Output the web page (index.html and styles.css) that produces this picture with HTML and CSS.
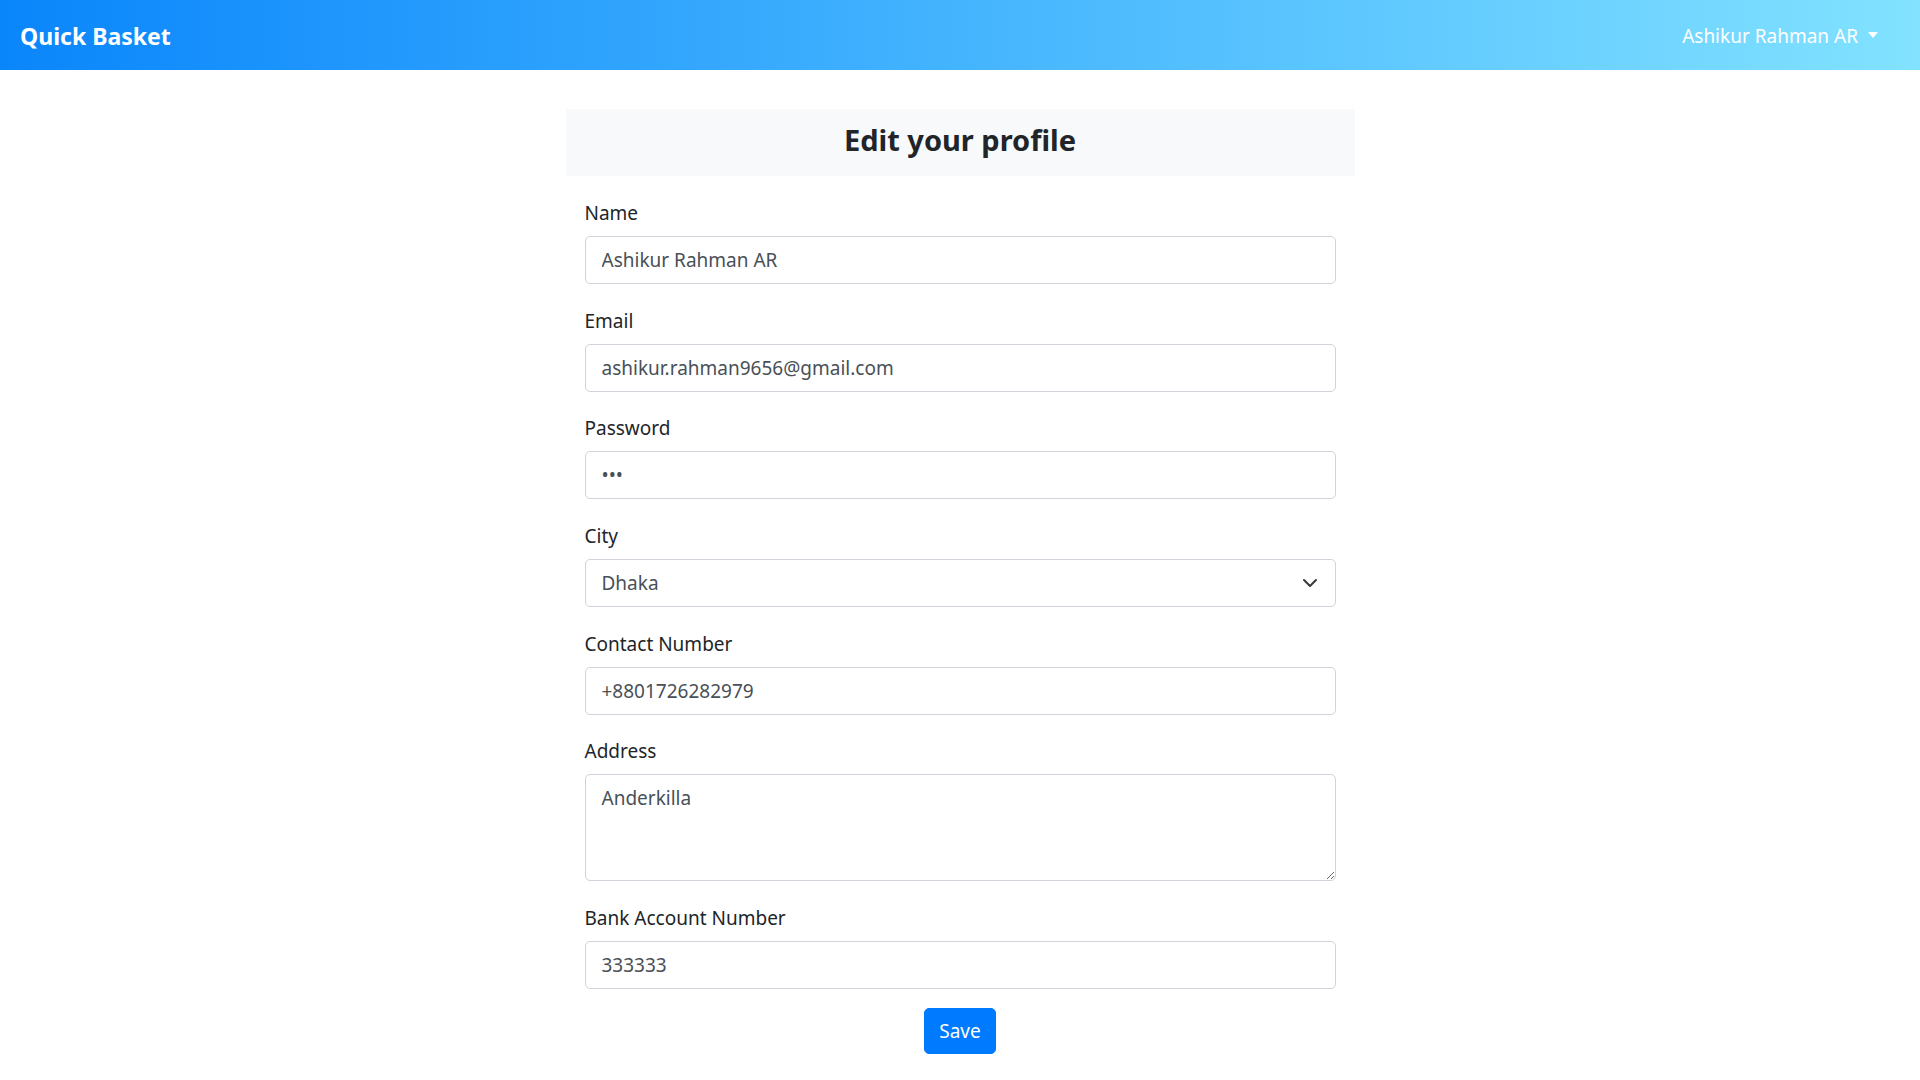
FILE: index.html
```html
<!DOCTYPE html>
<html lang="en">
<head>
<meta charset="utf-8">
<title>Quick Basket - Edit your profile</title>
<link rel="stylesheet" href="styles.css">
</head>
<body>
<header class="navbar">
  <a class="brand" href="#">Quick Basket</a>
  <div class="user">Ashikur Rahman AR<span class="caret"></span></div>
</header>
<main class="page">
  <section class="card">
    <div class="card-head"><h3 class="title">Edit your profile</h3></div>
    <form class="card-body">
      <div class="field">
        <label class="label" for="name">Name</label>
        <input class="control" id="name" type="text" value="Ashikur Rahman AR">
      </div>
      <div class="field">
        <label class="label" for="email">Email</label>
        <input class="control" id="email" type="email" value="ashikur.rahman9656@gmail.com">
      </div>
      <div class="field">
        <label class="label" for="password">Password</label>
        <input class="control" id="password" type="password" value="123">
      </div>
      <div class="field">
        <label class="label" for="city">City</label>
        <div class="select-wrap">
          <select class="control select" id="city">
            <option>Dhaka</option>
            <option>Chattogram</option>
            <option>Khulna</option>
          </select>
          <svg class="chevron" width="16" height="16" viewBox="0 0 16 16" aria-hidden="true"><path d="M2 5l6 6 6-6" fill="none" stroke="#343a40" stroke-width="2" stroke-linecap="round" stroke-linejoin="round"/></svg>
        </div>
      </div>
      <div class="field">
        <label class="label" for="contact">Contact Number</label>
        <input class="control" id="contact" type="text" value="+8801726282979">
      </div>
      <div class="field">
        <label class="label" for="address">Address</label>
        <textarea class="control area" id="address" rows="3">Anderkilla</textarea>
      </div>
      <div class="field">
        <label class="label" for="bank">Bank Account Number</label>
        <input class="control" id="bank" type="text" value="333333">
      </div>
      <div class="actions">
        <button class="btn" type="button">Save</button>
      </div>
    </form>
  </section>
</main>
</body>
</html>
```
FILE: styles.css
```css
* { box-sizing: border-box; }
html, body { margin: 0; padding: 0; }
body {
  font-family: "Noto Sans", "Open Sans", "Liberation Sans", sans-serif;
  color: #212529;
  background: #fff;
}
.navbar {
  height: 70px;
  display: flex;
  align-items: center;
  justify-content: space-between;
  padding: 2px 42px 0 20px;
  background: linear-gradient(to right, #0a86fb, #44b4fe 50%, #82e2ff);
}
.brand {
  color: #fff;
  font-weight: 700;
  font-size: 23px;
  text-decoration: none;
}
.user {
  color: #fff;
  font-size: 19px;
  display: flex;
  align-items: center;
}
.caret {
  display: inline-block;
  margin-left: 10px;
  border-top: 6px solid #fff;
  border-left: 5.5px solid transparent;
  border-right: 5.5px solid transparent;
  position: relative;
  top: -1px;
}
.page {
  display: flex;
  justify-content: center;
  padding-top: 39px;
}
.card {
  width: 789px;
}
.card-head {
  background: #f8f9fa;
  height: 67px;
  display: flex;
  align-items: center;
  justify-content: center;
  padding-bottom: 7px;
}
.title {
  margin: 0;
  font-size: 29px;
  font-weight: 700;
  color: #212529;
}
.card-body {
  padding: 22px 19px 0;
  display: flex;
  flex-direction: column;
  gap: 21.7px;
}
.field {
  display: flex;
  flex-direction: column;
}
.label {
  font-size: 19px;
  line-height: 30px;
  margin-bottom: 8px;
  color: #212529;
}
.control {
  width: 100%;
  height: 48px;
  padding: 8px 16px;
  font-family: inherit;
  font-size: 19px;
  line-height: 30px;
  color: #495057;
  background: #fff;
  border: 1px solid #ced4da;
  border-radius: 5px;
  outline: none;
}
.select-wrap { position: relative; }
.select {
  appearance: none;
  -webkit-appearance: none;
  padding-right: 48px;
}
.chevron {
  position: absolute;
  right: 18px;
  top: 16px;
  pointer-events: none;
}
.area {
  height: 107px;
  resize: vertical;
}
.actions {
  display: flex;
  justify-content: center;
  margin-top: -3px;
}
.btn {
  font-family: inherit;
  font-size: 19px;
  line-height: 30px;
  padding: 7px 14px;
  color: #fff;
  background: #007bff;
  border: 1px solid #007bff;
  border-radius: 5px;
  cursor: pointer;
}
```
